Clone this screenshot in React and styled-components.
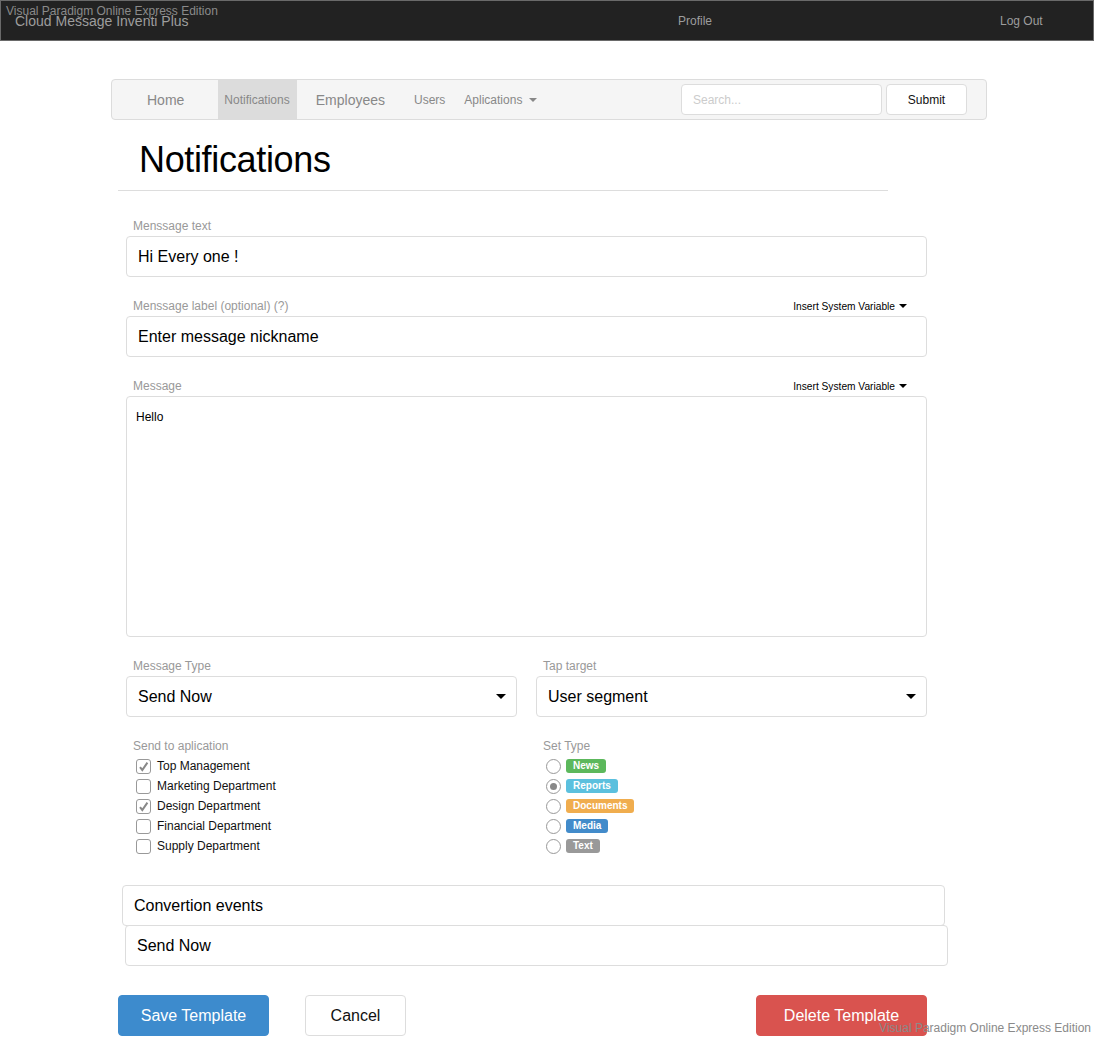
import React from "react";
import styled, { createGlobalStyle } from "styled-components";

const Global = createGlobalStyle`
  html, body { margin: 0; padding: 0; background: #fff; }
  body { font-family: "Liberation Sans", Arial, sans-serif; }
  * { box-sizing: border-box; }
`;

const Page = styled.div`
  position: relative;
  width: 1097px;
  height: 1038px;
  overflow: hidden;
`;

const TopBar = styled.div`
  position: relative;
  width: 1094px;
  height: 41px;
  background: #222;
  border: 1px solid #6a6a6a;
  display: flex;
  align-items: center;
  font-size: 12px;
  color: #9d9d9d;
`;

const Watermark = styled.div`
  position: absolute;
  font-size: 12px;
  color: #8a8a8a;
  white-space: nowrap;
  ${(p) => (p.$bottom ? "right: 6px; bottom: 3px;" : "left: 5px; top: 3px;")}
`;

const Brand = styled.div`
  font-size: 14px;
  color: #9d9d9d;
  margin-left: 14px;
  padding-top: 1px;
  width: 663px;
`;

const TopLink = styled.div`
  width: ${(p) => p.$w}px;
`;

const Container = styled.div`
  margin: 38px 0 0 111px;
  width: 876px;
`;

const NavBar = styled.div`
  height: 41px;
  background: #f5f5f5;
  border: 1px solid #dcdcdc;
  border-radius: 4px;
  display: flex;
  align-items: stretch;
`;

const NavItem = styled.div`
  display: flex;
  align-items: center;
  padding: 0 ${(p) => p.$pr}px 0 ${(p) => p.$pl}px;
  font-size: ${(p) => (p.$big ? 14 : 12)}px;
  color: #888;
  background: ${(p) => (p.$active ? "#dcdcdc" : "transparent")};
`;

const Caret = styled.span`
  display: inline-block;
  width: 0;
  height: 0;
  border-left: ${(p) => p.$s}px solid transparent;
  border-right: ${(p) => p.$s}px solid transparent;
  border-top: ${(p) => p.$s}px solid ${(p) => p.$c || "#000"};
  margin-left: ${(p) => p.$ml || 7}px;
`;

const NavSearch = styled.div`
  margin-left: auto;
  display: flex;
  align-items: center;
  gap: 4px;
  padding-right: 19px;
`;

const SearchBox = styled.input`
  width: 201px;
  height: 31px;
  border: 1px solid #ddd;
  border-radius: 4px;
  padding: 0 11px;
  font: 12px "Liberation Sans", Arial, sans-serif;
  &::placeholder { color: #ccc; }
`;

const SmallBtn = styled.button`
  width: 81px;
  height: 31px;
  background: #fff;
  border: 1px solid #ddd;
  border-radius: 4px;
  font: 12px "Liberation Sans", Arial, sans-serif;
  color: #111;
`;

const Heading = styled.h1`
  margin: 19px 0 0 28px;
  font-weight: 400;
  font-size: 36px;
  line-height: 42px;
  color: #000;
  letter-spacing: -0.35px;
`;

const Rule = styled.div`
  margin: 9px 0 0 7px;
  width: 770px;
  border-top: 1px solid #ddd;
`;

const Form = styled.div`
  margin: 25px 0 0 15px;
  width: 801px;
  display: flex;
  flex-direction: column;
`;

const Group = styled.div`
  display: flex;
  flex-direction: column;
  margin-bottom: 19px;
  flex: 1;
`;

const LabelRow = styled.div`
  height: 20px;
  display: flex;
  align-items: center;
  justify-content: space-between;
  padding: 0 20px 0 7px;
  font-size: 12px;
  color: #999;
`;

const Insert = styled.span`
  font-size: 10.2px;
  color: #000;
  display: flex;
  align-items: center;
`;

const Field = styled.div`
  height: ${(p) => p.$h || 41}px;
  border: 1px solid #ddd;
  border-radius: 4px;
  display: flex;
  align-items: ${(p) => (p.$area ? "flex-start" : "center")};
  justify-content: space-between;
  padding: ${(p) => (p.$area ? "13px 9px" : "0 10px 0 11px")};
  font-size: ${(p) => (p.$area ? 12 : 16)}px;
  color: #000;
  background: #fff;
`;

const Row = styled.div`
  display: flex;
  gap: 19px;
`;

const OptionList = styled.div`
  display: flex;
  flex-direction: column;
  padding-left: 10px;
`;

const Option = styled.div`
  height: 20px;
  display: flex;
  align-items: center;
  gap: 6px;
  font-size: 12px;
  color: #111;
`;

const Check = styled.span`
  width: 15px;
  height: 15px;
  border: 1px solid #999;
  border-radius: 3px;
  display: flex;
  align-items: center;
  justify-content: center;
  background: #fff;
`;

const Radio = styled.span`
  width: 15px;
  height: 15px;
  border: 1px solid #999;
  border-radius: 50%;
  display: flex;
  align-items: center;
  justify-content: center;
  margin-right: -1px;
  &::after {
    content: "";
    width: 7px;
    height: 7px;
    border-radius: 50%;
    background: ${(p) => (p.$on ? "#888" : "transparent")};
  }
`;

const Badge = styled.span`
  background: ${(p) => p.$c};
  color: #fff;
  font-size: 10px;
  font-weight: 700;
  border-radius: 3px;
  padding: 1px 7px 2px;
  line-height: 11px;
`;

const Stack = styled.div`
  margin: 10px 0 0 11px;
  display: flex;
  flex-direction: column;
`;

const StackField = styled(Field)`
  width: 823px;
  margin-left: ${(p) => p.$ml || 0}px;
  margin-top: ${(p) => p.$mt || 0}px;
`;

const Buttons = styled.div`
  margin: 29px 0 0 7px;
  display: flex;
  gap: 36px;
  width: 809px;
`;

const Btn = styled.button`
  height: 41px;
  width: ${(p) => p.$w}px;
  border-radius: 4px;
  font: 16px "Liberation Sans", Arial, sans-serif;
  border: 1px solid ${(p) => p.$border || p.$bg};
  background: ${(p) => p.$bg};
  color: ${(p) => p.$color || "#fff"};
  margin-left: ${(p) => (p.$push ? "auto" : "0")};
`;

const CheckMark = () => (
  <svg width="11" height="11" viewBox="0 0 11 11">
    <path d="M2 6.2 L4.3 9 L9.4 1.6" fill="none" stroke="#888" strokeWidth="2" />
  </svg>
);

const apps = [
  ["Top Management", true],
  ["Marketing Department", false],
  ["Design Department", true],
  ["Financial Department", false],
  ["Supply Department", false],
];

const types = [
  ["News", "#5cb85c", false],
  ["Reports", "#5bc0de", true],
  ["Documents", "#f0ad4e", false],
  ["Media", "#428bca", false],
  ["Text", "#999", false],
];

export default function App() {
  return (
    <Page>
      <Global />
      <TopBar>
        <Watermark>Visual Paradigm Online Express Edition</Watermark>
        <Brand>Cloud Message Inventi Plus</Brand>
        <TopLink $w={322}>Profile</TopLink>
        <TopLink $w={60}>Log Out</TopLink>
      </TopBar>

      <Container>
        <NavBar>
          <NavItem $big $pl={35} $pr={34}>Home</NavItem>
          <NavItem $active $pl={6} $pr={7}>Notifications</NavItem>
          <NavItem $big $pl={19} $pr={29}>Employees</NavItem>
          <NavItem $pl={0} $pr={19}>Users</NavItem>
          <NavItem $pl={0} $pr={0}>
            Aplications <Caret $s={4} $c="#888" />
          </NavItem>
          <NavSearch>
            <SearchBox placeholder="Search..." />
            <SmallBtn>Submit</SmallBtn>
          </NavSearch>
        </NavBar>

        <Heading>Notifications</Heading>
        <Rule />

        <Form>
          <Group>
            <LabelRow>Menssage text</LabelRow>
            <Field>Hi Every one !</Field>
          </Group>
          <Group>
            <LabelRow>
              Menssage label (optional) (?)
              <Insert>Insert System Variable <Caret $s={4} $ml={4} /></Insert>
            </LabelRow>
            <Field>Enter message nickname</Field>
          </Group>
          <Group>
            <LabelRow>
              Message
              <Insert>Insert System Variable <Caret $s={4} $ml={4} /></Insert>
            </LabelRow>
            <Field $area $h={241}>Hello</Field>
          </Group>
          <Row>
            <Group>
              <LabelRow>Message Type</LabelRow>
              <Field>
                Send Now <Caret $s={5} />
              </Field>
            </Group>
            <Group>
              <LabelRow>Tap target</LabelRow>
              <Field>
                User segment <Caret $s={5} />
              </Field>
            </Group>
          </Row>
          <Row>
            <Group>
              <LabelRow>Send to aplication</LabelRow>
              <OptionList>
                {apps.map(([name, on]) => (
                  <Option key={name}>
                    <Check>{on && <CheckMark />}</Check>
                    {name}
                  </Option>
                ))}
              </OptionList>
            </Group>
            <Group>
              <LabelRow>Set Type</LabelRow>
              <OptionList>
                {types.map(([name, c, on]) => (
                  <Option key={name}>
                    <Radio $on={on} />
                    <Badge $c={c}>{name}</Badge>
                  </Option>
                ))}
              </OptionList>
            </Group>
          </Row>
        </Form>

        <Stack>
          <StackField>Convertion events</StackField>
          <StackField $ml={3} $mt={-1}>Send Now</StackField>
        </Stack>

        <Buttons>
          <Btn $w={151} $bg="#3d8bcd">Save Template</Btn>
          <Btn $w={101} $bg="#fff" $border="#ddd" $color="#111">Cancel</Btn>
          <Btn $w={171} $bg="#d9534f" $push>Delete Template</Btn>
        </Buttons>
      </Container>

      <Watermark $bottom>Visual Paradigm Online Express Edition</Watermark>
    </Page>
  );
}
